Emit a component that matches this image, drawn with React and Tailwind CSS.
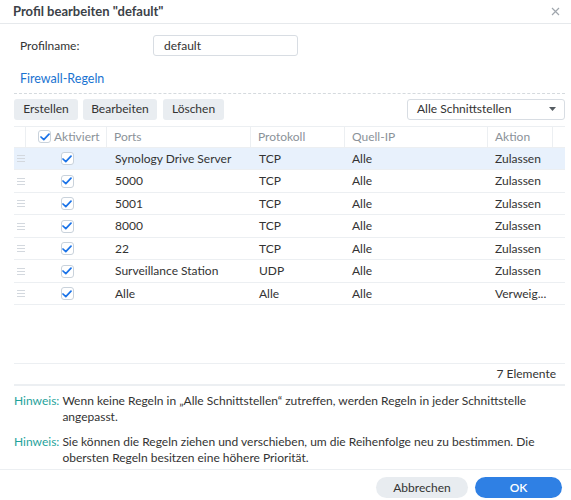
import React from "react";

const rows = [
  ["Synology Drive Server", "TCP", "Alle", "Zulassen"],
  ["5000", "TCP", "Alle", "Zulassen"],
  ["5001", "TCP", "Alle", "Zulassen"],
  ["8000", "TCP", "Alle", "Zulassen"],
  ["22", "TCP", "Alle", "Zulassen"],
  ["Surveillance Station", "UDP", "Alle", "Zulassen"],
  ["Alle", "Alle", "Alle", "Verweig..."],
];

function Check() {
  return (
    <span className="flex h-[13px] w-[13px] items-center justify-center rounded-[3px] border border-[#c9d2db] bg-white">
      <svg width="10" height="8" viewBox="0 0 10 8">
        <path d="M1 4 L3.8 6.6 L9 1.2" fill="none" stroke="#1a73e8" strokeWidth="1.7" strokeLinecap="round" strokeLinejoin="round" />
      </svg>
    </span>
  );
}

function Handle() {
  return (
    <svg width="8" height="7" viewBox="0 0 8 7">
      <path d="M0 0.5H8M0 3.5H8M0 6.5H8" stroke="#d3d8de" strokeWidth="1" />
    </svg>
  );
}

export default function App() {
  return (
    <div
      className="relative flex h-[500px] w-[571px] flex-col bg-white text-[12px] text-[#333]"
      style={{ fontFamily: 'Lato, "Noto Sans", sans-serif' }}
    >
      {/* Title */}
      <div className="flex h-[24px] items-center justify-between border-b border-[#e6e9ec] pl-[13px] pr-[11px]">
        <span className="text-[13px] font-bold text-[#3b4147]">Profil bearbeiten "default"</span>
        <svg width="9" height="9" viewBox="0 0 9 9">
          <path d="M1 1L8 8M8 1L1 8" stroke="#a0a6ad" strokeWidth="1.2" />
        </svg>
      </div>

      {/* Profilname */}
      <div className="mt-[11px] flex items-center pl-[20px]">
        <span className="w-[133px]">Profilname:</span>
        <div className="flex h-[21px] w-[145px] items-center rounded-[3px] border border-[#d8dde3] px-[10px]">default</div>
      </div>

      {/* Section title */}
      <div className="ml-[14px] mr-[6px] mt-[14px] border-b border-dashed border-[#d5dade] pb-[4px] pl-[6px] text-[12.5px] text-[#1a73d1]">
        Firewall-Regeln
      </div>

      {/* Toolbar */}
      <div className="ml-[14px] mr-[6px] mt-[5px] flex items-center justify-between">
        <div className="flex">
          <button className="h-[21px] w-[64px] rounded-[3px] bg-[#e9edf1]">Erstellen</button>
          <button className="ml-[5px] h-[21px] w-[74px] rounded-[3px] bg-[#e9edf1]">Bearbeiten</button>
          <button className="ml-[6px] h-[21px] w-[61px] rounded-[3px] bg-[#e9edf1]">Löschen</button>
        </div>
        <div className="flex h-[21px] w-[158px] items-center justify-between rounded-[3px] border border-[#d8dde3] pl-[9px] pr-[8px]">
          <span>Alle Schnittstellen</span>
          <svg width="7" height="4" viewBox="0 0 7 4">
            <path d="M0 0H7L3.5 4Z" fill="#555b61" />
          </svg>
        </div>
      </div>

      {/* Table */}
      <div className="ml-[14px] mr-[6px] mt-[6px] flex flex-col">
        <div className="flex h-[22px] items-center border-y border-[#eceff2] text-[#8b9299]">
          <div className="h-full w-[12px] border-r border-[#eceff2]" />
          <div className="flex h-full w-[81px] items-center gap-[3px] border-r border-[#eceff2] pl-[12px]">
            <Check />
            <span>Aktiviert</span>
          </div>
          <div className="flex h-full w-[144px] items-center border-r border-[#eceff2] pl-[7px]">Ports</div>
          <div className="flex h-full w-[94px] items-center border-r border-[#eceff2] pl-[7px]">Protokoll</div>
          <div className="flex h-full w-[143px] items-center border-r border-[#eceff2] pl-[7px]">Quell-IP</div>
          <div className="flex h-full w-[65px] items-center border-r border-[#eceff2] pl-[7px]">Aktion</div>
          <div className="flex-1" />
        </div>
        {rows.map((r, i) => (
          <div
            key={i}
            className={`flex h-[22.5px] items-center border-b border-[#eceff2] ${i === 0 ? "bg-[#e8f1fc]" : ""}`}
          >
            <div className="flex w-[12px] justify-center pl-[1px]">
              <Handle />
            </div>
            <div className="flex w-[81px] justify-center pl-[1px]">
              <Check />
            </div>
            <div className="w-[144px] pl-[8px]">{r[0]}</div>
            <div className="w-[94px] pl-[8px]">{r[1]}</div>
            <div className="w-[143px] pl-[7px]">{r[2]}</div>
            <div className="w-[65px] pl-[7px]">{r[3]}</div>
            <div className="flex-1" />
          </div>
        ))}
        <div className="h-[59px] border-b border-[#eceff2]" />
        <div className="flex h-[22px] items-center justify-end border-b-2 border-[#eceff2] pr-[9px]">7 Elemente</div>
      </div>

      {/* Notes */}
      <div className="mt-[7px] flex flex-col gap-[9px] pl-[14px] pr-[14px] leading-[16px]">
        <div className="flex">
          <span className="shrink-0 whitespace-nowrap pr-[3px] text-[#1fa39b]">Hinweis:</span>
          <span>Wenn keine Regeln in „Alle Schnittstellen“ zutreffen, werden Regeln in jeder Schnittstelle angepasst.</span>
        </div>
        <div className="flex">
          <span className="shrink-0 whitespace-nowrap pr-[3px] text-[#1fa39b]">Hinweis:</span>
          <span>Sie können die Regeln ziehen und verschieben, um die Reihenfolge neu zu bestimmen. Die obersten Regeln besitzen eine höhere Priorität.</span>
        </div>
      </div>

      {/* Footer */}
      <div className="mt-auto flex h-[31px] items-start justify-end gap-[7px] border-t border-[#eceff2] pr-[9px] pt-[7px]">
        <button className="h-[21px] w-[92px] rounded-full bg-[#e8ecf0] text-[#333]">Abbrechen</button>
        <button className="h-[21px] w-[87px] rounded-full bg-[#2f80e4] font-semibold text-white">OK</button>
      </div>
    </div>
  );
}
